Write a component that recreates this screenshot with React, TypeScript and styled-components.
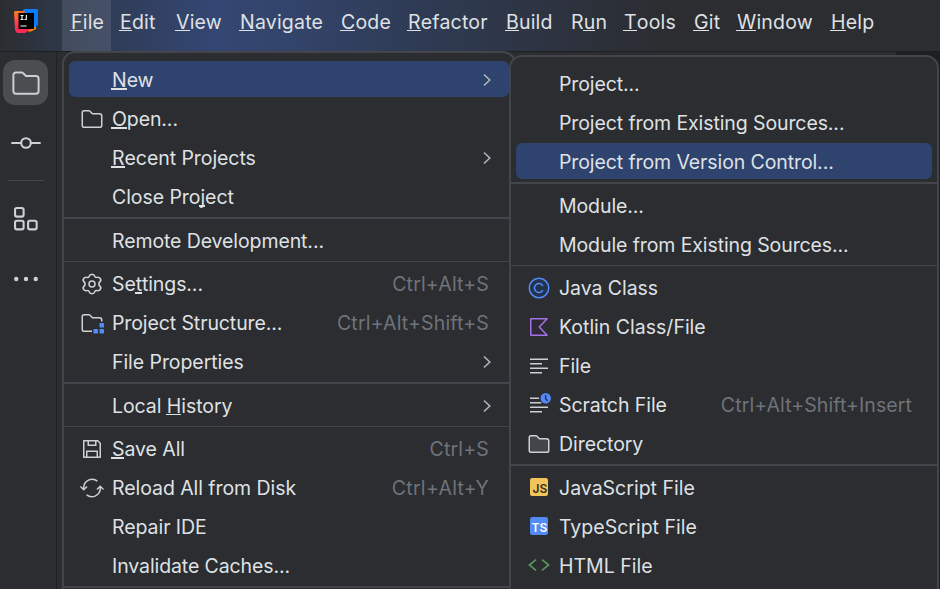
import React from "react";
import styled, { createGlobalStyle } from "styled-components";

const Global = createGlobalStyle`
  * { box-sizing: border-box; }
  body {
    margin: 0;
    background: #1e1f22;
    color: #dfe1e5;
    font-family: Inter, "Liberation Sans", sans-serif;
    font-size: 19.5px;
    overflow: hidden;
  }
`;

const Window = styled.div`
  position: relative;
  display: grid;
  grid-template-rows: 52px 1fr;
  width: 940px;
  height: 589px;
  overflow: hidden;
`;

const TitleBar = styled.header`
  display: flex;
  align-items: stretch;
  border-bottom: 1px solid #1e1f22;
  background: linear-gradient(90deg, #2b2d30 0, #2f3a4e 75px, #344672 215px, #33446b 290px, #2f3b54 420px, #2d333f 560px, #2b2d30 665px);
`;

const LogoBox = styled.div`
  width: 62px;
  padding: 9px 0 0 14px;
  svg { display: block; }
`;

const MenuTitle = styled.div<{ $open?: boolean; $w: number }>`
  width: ${(p) => p.$w}px;
  padding-left: 9px;
  line-height: 44px;
  letter-spacing: 0.2px;
  white-space: nowrap;
  background: ${(p) => (p.$open ? "rgba(255,255,255,0.1)" : "transparent")};
`;

const Mnemonic = styled.span<{ $thick?: number; $lift: number }>`
  position: relative;
  &::after {
    content: "";
    position: absolute;
    left: -1px;
    right: 0;
    bottom: ${(p) => p.$lift}px;
    height: ${(p) => p.$thick ?? 1}px;
    background: #dfe1e5;
  }
`;

const Body = styled.div`
  display: grid;
  grid-template-columns: 57px 839px 1fr;
`;

const ToolStripe = styled.nav`
  display: flex;
  flex-direction: column;
  align-items: center;
  padding: 8px 5px 0 0;
  background: #2b2d30;
  border-right: 1px solid #1e1f22;
`;

const StripeButton = styled.div<{ $active?: boolean }>`
  display: grid;
  place-items: center;
  width: 45px;
  height: 45px;
  margin-bottom: 15px;
  border-radius: 12px;
  background: ${(p) => (p.$active ? "#4b4d51" : "transparent")};
  svg { display: block; }
`;

const StripeDivider = styled.div`
  width: 36px;
  height: 1px;
  margin-bottom: 15px;
  background: #43454a;
`;

const Backdrop = styled.div`
  background: #2b2d30;
`;

const Popup = styled.div<{ $x: number; $y: number; $w: number }>`
  position: absolute;
  left: ${(p) => p.$x}px;
  top: ${(p) => p.$y}px;
  display: flex;
  flex-direction: column;
  width: ${(p) => p.$w}px;
  height: 600px;
  padding-top: 7px;
  border: 2px solid #43454a;
  border-radius: 13px;
  background: #2b2d30;
`;

const Item = styled.div<{ $selected?: boolean }>`
  display: flex;
  flex-shrink: 0;
  align-items: center;
  height: 36px;
  margin: 1px 5px 2px;
  padding: 0 20px 0 11px;
  border-radius: 6px;
  background: ${(p) => (p.$selected ? "#2e436e" : "transparent")};
  white-space: nowrap;
`;

const IconSlot = styled.div<{ $raised?: boolean }>`
  width: 24px;
  height: ${(p) => (p.$raised ? 24 : 26)}px;
  padding-top: ${(p) => (p.$raised ? 0 : 2)}px;
  margin-right: 8px;
  svg { display: block; }
`;

const Label = styled.span<{ $ls: number }>`
  flex: 1;
  padding-top: 1px;
  line-height: 24px;
  letter-spacing: ${(p) => p.$ls}px;
`;

const Shortcut = styled.span<{ $ls?: number }>`
  padding-top: 1px;
  line-height: 24px;
  letter-spacing: ${(p) => p.$ls ?? 0.17}px;
  color: #6f737a;
`;

const Chevron = styled.svg`
  display: block;
  margin: 2px -4px 0 0;
`;

const Separator = styled.div<{ $h: number }>`
  flex-shrink: 0;
  height: ${(p) => p.$h}px;
  margin: 1px 0 2px;
  background: #43454a;
`;

const Svg = ({ children, size = 24, box = 16 }: { children: React.ReactNode; size?: number; box?: number }) => (
  <svg width={size} height={size} viewBox={`0 0 ${box} ${box}`} fill="none">
    {children}
  </svg>
);

const G = "#ced0d6";
const FOLDER =
  "M8.106 4.346L8.253 4.5H13C13.828 4.5 14.5 5.172 14.5 6V12.133C14.5 12.953 13.932 13.5 13.367 13.5H2.633C2.068 13.5 1.5 12.953 1.5 12.133V3.867C1.5 3.047 2.068 2.5 2.633 2.5H6.122C6.258 2.5 6.388 2.556 6.483 2.654L8.106 4.346Z";

const icons: Record<string, React.ReactNode> = {
  folder: <Svg><path d={FOLDER} stroke={G} /></Svg>,
  directory: <Svg><path d={FOLDER} fill="#43454a" stroke={G} /></Svg>,
  gear: (
    <Svg>
      <path
        d="M6.3 2.9C6.55 1.95 7.1 1.5 8 1.5C8.9 1.5 9.45 1.95 9.7 2.9C9.85 3.45 10.35 3.75 10.9 3.6C11.85 3.35 12.55 3.6 13 4.4C13.5 5.25 13.4 5.95 12.7 6.6C12.3 7 12.15 7.4 12.15 8C12.15 8.6 12.3 9 12.7 9.4C13.4 10.05 13.5 10.75 13 11.6C12.55 12.4 11.85 12.65 10.9 12.4C10.35 12.25 9.85 12.55 9.7 13.1C9.45 14.05 8.9 14.5 8 14.5C7.1 14.5 6.55 14.05 6.3 13.1C6.15 12.55 5.65 12.25 5.1 12.4C4.15 12.65 3.45 12.4 3 11.6C2.5 10.75 2.6 10.05 3.3 9.4C3.7 9 3.85 8.6 3.85 8C3.85 7.4 3.7 7 3.3 6.6C2.6 5.95 2.5 5.25 3 4.4C3.45 3.6 4.15 3.35 5.1 3.6C5.65 3.75 6.15 3.45 6.3 2.9Z"
        stroke={G}
        transform="translate(-0.9 0) scale(1.11 1)"
      />
      <circle cx="8" cy="8" r="2" stroke={G} />
    </Svg>
  ),
  structure: (
    <Svg>
      <path
        d="M8 13.5H2.633C2.068 13.5 1.5 12.953 1.5 12.133V3.867C1.5 3.047 2.068 2.5 2.633 2.5H6.122C6.258 2.5 6.388 2.556 6.483 2.654L8.253 4.5H13C13.828 4.5 14.5 5.172 14.5 6V7"
        stroke={G}
      />
      <rect x="13" y="8" width="3" height="3" rx="0.3" fill="#548af7" />
      <rect x="9" y="12" width="3" height="3" rx="0.3" fill="#548af7" />
      <rect x="13" y="12" width="3" height="3" rx="0.3" fill="#548af7" />
    </Svg>
  ),
  save: (
    <Svg>
      <path d="M2.5 2.5H11.8L13.5 4.2V13.5H2.5V2.5Z" stroke={G} strokeLinejoin="round" />
      <path d="M5.5 2.5V5.5H10.5V2.5M4.5 13.5V9.5H11.5V13.5" stroke={G} />
    </Svg>
  ),
  reload: (
    <Svg>
      <path d="M11.6 3.4A5.6 5.6 0 0 0 2.5 7.8V9M4.4 12.6A5.6 5.6 0 0 0 13.5 8.2V7" stroke={G} />
      <path d="M0.3 7L2.5 9.2L4.7 7M11.3 9L13.5 6.8L15.7 9" stroke={G} />
    </Svg>
  ),
  java: (
    <Svg>
      <circle cx="8" cy="8" r="6.5" fill="#25324d" stroke="#548af7" />
      <path d="M10.6 6.6A3 3 0 1 0 10.6 9.4" stroke="#548af7" />
    </Svg>
  ),
  kotlin: (
    <Svg>
      <path d="M2.5 2.5H13.4L8.2 8L13.4 13.5H2.5V2.5Z" fill="#2f2936" stroke="#a571e6" strokeLinejoin="round" />
    </Svg>
  ),
  file: (
    <Svg>
      <path d="M2 3.5H14M2 6.5H10M2 9.5H14M2 12.5H10" stroke={G} />
    </Svg>
  ),
  scratch: (
    <Svg>
      <path d="M2 3.5H8M2 6.5H9.5M2 9.5H14M2 12.5H10" stroke={G} />
      <circle cx="12.5" cy="3.5" r="3.5" fill="#548af7" />
      <path d="M12.4 1.3V3.9L13.8 5.2" stroke="#25324d" strokeWidth="0.9" />
    </Svg>
  ),
  html: (
    <Svg>
      <path d="M6 4.4L1.6 8L6 11.6M10 4.4L14.4 8L10 11.6" stroke="#57965c" strokeWidth="1.1" />
    </Svg>
  ),
  js: (
    <Svg>
      <rect x="2" y="2" width="12" height="12" rx="1.5" fill="#f2c55c" />
      <text x="3.7" y="12" fontSize="8" fontWeight="600" fill="#3a2f17" fontFamily="Inter">JS</text>
    </Svg>
  ),
  ts: (
    <Svg>
      <rect x="2" y="2" width="12" height="12" rx="1.5" fill="#548af7" />
      <text x="3" y="12" fontSize="8" fontWeight="600" fill="#fff" fontFamily="Inter">TS</text>
    </Svg>
  ),
};

type Row =
  | { sep: number }
  | {
      label: string;
      key?: number;
      thick?: number;
      icon?: string;
      raised?: boolean;
      shortcut?: string;
      arrow?: boolean;
      selected?: boolean;
      sls?: number;
    };

const fileMenu: Row[] = [
  { label: "New", key: 0, thick: 2, arrow: true, selected: true },
  { label: "Open...", key: 0, thick: 2, icon: "folder" },
  { label: "Recent Projects", key: 0, thick: 2, arrow: true },
  { label: "Close Project", key: 9, thick: 2 },
  { sep: 2 },
  { label: "Remote Development..." },
  { sep: 1 },
  { label: "Settings...", key: 2, thick: 2, icon: "gear", shortcut: "Ctrl+Alt+S" },
  { label: "Project Structure...", icon: "structure", shortcut: "Ctrl+Alt+Shift+S" },
  { label: "File Properties", arrow: true },
  { sep: 2 },
  { label: "Local History", key: 6, arrow: true },
  { sep: 1 },
  { label: "Save All", key: 0, thick: 2, icon: "save", shortcut: "Ctrl+S" },
  { label: "Reload All from Disk", icon: "reload", shortcut: "Ctrl+Alt+Y", sls: 0.3 },
  { label: "Repair IDE" },
  { label: "Invalidate Caches..." },
  { sep: 2 },
];

const newMenu: Row[] = [
  { label: "Project..." },
  { label: "Project from Existing Sources..." },
  { label: "Project from Version Control...", selected: true },
  { sep: 2 },
  { label: "Module..." },
  { label: "Module from Existing Sources..." },
  { sep: 1 },
  { label: "Java Class", icon: "java" },
  { label: "Kotlin Class/File", icon: "kotlin" },
  { label: "File", icon: "file" },
  { label: "Scratch File", icon: "scratch", shortcut: "Ctrl+Alt+Shift+Insert", sls: 0.09 },
  { label: "Directory", icon: "directory" },
  { sep: 2 },
  { label: "JavaScript File", icon: "js", raised: true },
  { label: "TypeScript File", icon: "ts", raised: true },
  { label: "HTML File", icon: "html", raised: true },
];

const titles: { label: string; key: number; w: number }[] = [
  { label: "File", key: 0, w: 49 },
  { label: "Edit", key: 0, w: 56 },
  { label: "View", key: 0, w: 64 },
  { label: "Navigate", key: 0, w: 101 },
  { label: "Code", key: 0, w: 67 },
  { label: "Refactor", key: 0, w: 98 },
  { label: "Build", key: 0, w: 65 },
  { label: "Run", key: 1, w: 53 },
  { label: "Tools", key: 0, w: 70 },
  { label: "Git", key: 0, w: 43 },
  { label: "Window", key: 0, w: 94 },
  { label: "Help", key: 0, w: 60 },
];

const Text = ({ label, at, thick, lift }: { label: string; at?: number; thick?: number; lift: number }) =>
  at === undefined ? (
    <>{label}</>
  ) : (
    <>
      {label.slice(0, at)}
      <Mnemonic $thick={thick} $lift={lift}>{label[at]}</Mnemonic>
      {label.slice(at + 1)}
    </>
  );

const MenuRows = ({ rows }: { rows: Row[] }) => (
  <>
    {rows.map((r, i) =>
      "sep" in r ? (
        <Separator key={i} $h={r.sep} />
      ) : (
        <Item key={i} $selected={r.selected}>
          <IconSlot $raised={r.raised}>{r.icon && icons[r.icon]}</IconSlot>
          <Label $ls={r.label.endsWith("...") ? -0.1 : r.raised || r.icon === "kotlin" ? 0 : -0.06}>
            <Text label={r.label} at={r.key} thick={r.thick} lift={r.thick === 2 ? 1.5 : 2.5} />
          </Label>
          {r.shortcut && <Shortcut $ls={r.sls}>{r.shortcut}</Shortcut>}
          {r.arrow && (
            <Chevron width="12" height="16" viewBox="0 0 12 16" fill="none">
              <path d="M3 2.5L8.8 8L3 13.5" stroke="#b4b8bf" strokeWidth="1.5" />
            </Chevron>
          )}
        </Item>
      )
    )}
  </>
);

const Logo = () => (
  <svg width="24" height="24" viewBox="0 0 24 24">
    <defs>
      <linearGradient id="warm" x1="0" y1="0" x2="0.3" y2="1">
        <stop offset="0" stopColor="#fc801d" />
        <stop offset="0.35" stopColor="#fb5a3c" />
        <stop offset="0.7" stopColor="#fe2857" />
      </linearGradient>
    </defs>
    <path d="M14 19L22 15V20L17 22.5H14Z" fill="#ff8100" />
    <path d="M10 0H23A1 1 0 0 1 24 1V16L19 19H8V3Z" fill="#087cfa" />
    <path d="M1 2H11L6 19H18L11 24H3L1 21L0 3Z" fill="url(#warm)" />
    <rect x="4.5" y="4" width="15.5" height="16" fill="#000" />
    <path d="M6.5 6.5H9.5M8 6.5V10.5M6.5 10.5H9.5M10.5 10.5H12.3V6M6.5 17H12.5" stroke="#fff" strokeWidth="1.1" fill="none" />
  </svg>
);

export default function App() {
  return (
    <Window>
      <Global />
      <TitleBar>
        <LogoBox><Logo /></LogoBox>
        {titles.map((t, i) => (
          <MenuTitle key={t.label} $w={t.w} $open={i === 0}>
            <Text label={t.label} at={t.key} lift={3} />
          </MenuTitle>
        ))}
      </TitleBar>
      <Body>
        <ToolStripe>
          <StripeButton $active>
            <Svg size={30} box={20}>
              <path
                d="M10 5.3H16.6C17.6 5.3 18.4 6.1 18.4 7.1V15.4C18.4 16.5 17.7 17.2 16.7 17.2H3.3C2.3 17.2 1.6 16.5 1.6 15.4V4.8C1.6 3.7 2.3 3 3.3 3H7.3C7.5 3 7.7 3.1 7.8 3.2L10 5.3Z"
                stroke={G}
                strokeWidth="1.3"
              />
            </Svg>
          </StripeButton>
          <StripeButton>
            <Svg size={30} box={20}>
              <circle cx="10" cy="10" r="3.2" stroke={G} strokeWidth="1.4" />
              <path d="M0.2 10H6.8M13.2 10H19.8" stroke={G} strokeWidth="1.3" />
            </Svg>
          </StripeButton>
          <StripeDivider />
          <StripeButton>
            <Svg size={30} box={20}>
              <rect x="2.7" y="2.7" width="5.7" height="5.7" rx="1.2" stroke={G} strokeWidth="1.4" />
              <rect x="2.7" y="11.2" width="5.7" height="5.7" rx="1.2" stroke={G} strokeWidth="1.4" />
              <rect x="11.4" y="11.2" width="5.7" height="5.7" rx="1.2" stroke={G} strokeWidth="1.4" />
            </Svg>
          </StripeButton>
          <StripeButton>
            <Svg size={30} box={20}>
              <circle cx="3.5" cy="10" r="1.45" fill={G} />
              <circle cx="10" cy="10" r="1.45" fill={G} />
              <circle cx="16.5" cy="10" r="1.45" fill={G} />
            </Svg>
          </StripeButton>
        </ToolStripe>
        <Backdrop />
      </Body>
      <Popup $x={62} $y={51} $w={454}>
        <MenuRows rows={fileMenu} />
      </Popup>
      <Popup $x={509} $y={55} $w={430}>
        <MenuRows rows={newMenu} />
      </Popup>
    </Window>
  );
}
